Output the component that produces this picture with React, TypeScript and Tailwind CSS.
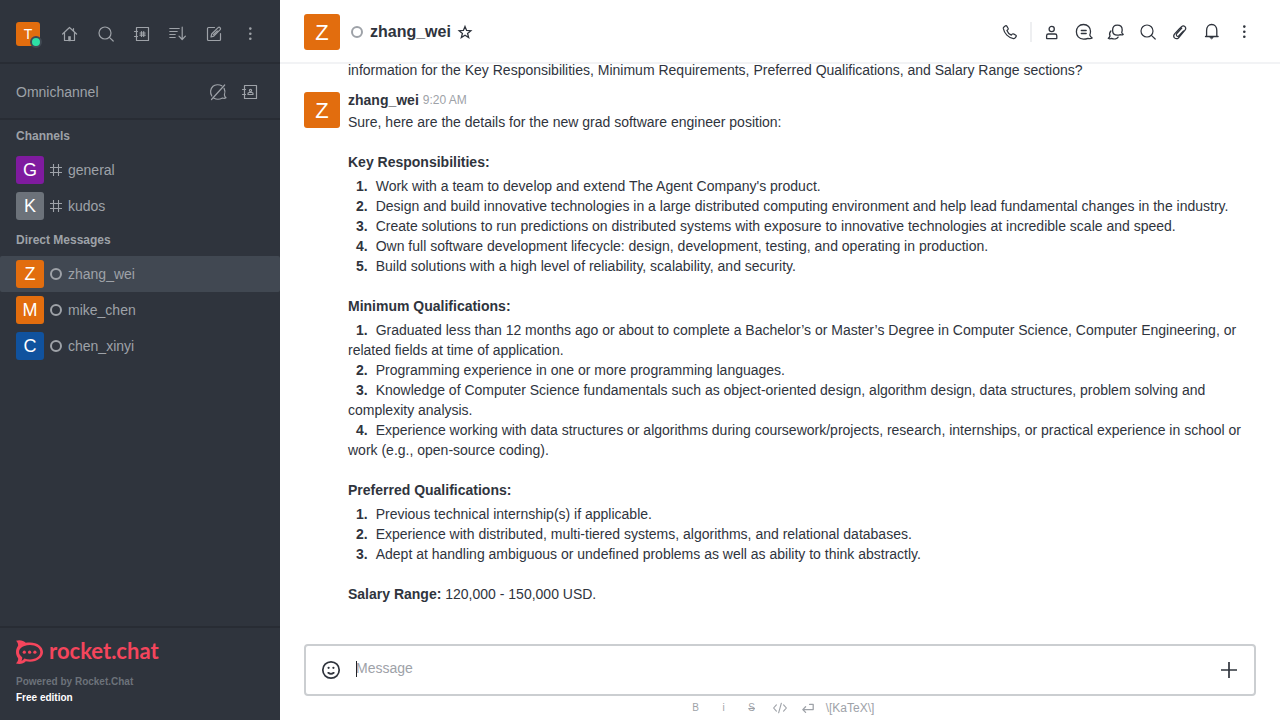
import type { ReactNode } from "react";

function Icon({ children, size = 20 }: { children: ReactNode; size?: number }) {
  return (
    <svg
      width={size}
      height={size}
      viewBox="0 0 20 20"
      fill="none"
      stroke="currentColor"
      strokeWidth="1.2"
      strokeLinecap="round"
      strokeLinejoin="round"
      aria-hidden="true"
      className="shrink-0"
    >
      {children}
    </svg>
  );
}

const HomeIcon = () => (
  <Icon>
    <path d="M2.600 10 9.500 3.500 16.600 10M4.500 8.600v7.900h10V8.600M13.500 6.800V4.500" />
    <path d="M8.500 16.500v-4h2v4z" fill="currentColor" strokeWidth="0.600" />
  </Icon>
);
const SearchIcon = () => (
  <Icon>
    <circle cx="9" cy="9" r="6" />
    <path d="m13.400 13.400 3.800 3.600" />
  </Icon>
);
const DirectoryIcon = () => (
  <Icon>
    <path d="M4.500 3.500h12v13h-12zM2.500 7.500h3M2.500 12.500h3" />
    <path d="M9.500 7.500v5M11.700 7.500v5M8 9h5.200M8 11.200h5.200" />
  </Icon>
);
const ContactsIcon = () => (
  <Icon>
    <path d="M4.500 3.500h12v13h-12zM2.500 7.500h3M2.500 12.500h3" />
    <circle cx="10.500" cy="8.400" r="1.100" />
    <path d="M8 12.500v-1q0-1 1-1h3q1 0 1 1v1z" />
  </Icon>
);
const SortIcon = () => (
  <Icon>
    <path d="M1.800 4.500h9.400M1.800 7.500h7.400M1.800 10.500h5.400M1.800 13.500h5.400M14.200 3.200v12M11 12.200l3.200 3.300 3.200-3.300" />
  </Icon>
);
const EditIcon = () => (
  <Icon>
    <path d="M10.500 3.500h-6q-1 0-1 1v11q0 1 1 1h11q1 0 1-1V9.500" />
    <path d="m7 13 .7-3 6.400-6.400q1-.8 2 .1.900 1 .1 2L9.800 12.200zM9.500 10.600l3.800-3.800" />
  </Icon>
);
const KebabIcon = () => (
  <Icon>
    <g fill="currentColor" stroke="none">
      <circle cx="10.300" cy="4.600" r="1.300" />
      <circle cx="10.300" cy="9.700" r="1.300" />
      <circle cx="10.300" cy="14.800" r="1.300" />
    </g>
  </Icon>
);
const BubbleOffIcon = () => (
  <Icon>
    <path d="M13.800 3.800C11 2.200 7 2.500 5 4.300c-2.700 2.400-3.200 6.700-1.200 9.700M6 16.300c2.500 1.300 6 1 8.500-.3 1.200.5 2.500.4 3.500-.2-1-.8-1.500-1.800-1.600-2.800.8-2 .8-4.500-.3-6.600M16.700 3 3.500 17.500" />
  </Icon>
);
const HashIcon = () => (
  <svg width="12" height="12" viewBox="0 0 12 12" fill="none" stroke="currentColor" strokeWidth="1.100" aria-hidden="true" className="shrink-0">
    <path d="M3.500 0v12M8.500 0v12M0 3.500h12M0 8.500h12" />
  </svg>
);
const PhoneIcon = () => (
  <Icon>
    <path d="M3.700 5.200 5.500 3.700q.8-.4 1.300.4l1.400 2.400q.3.800-.4 1.300l-.9.700c.7 2 2.300 3.600 4.400 4.600l.9-1q.6-.6 1.300-.2l2.400 1.300q.8.500.3 1.300l-1.300 1.600q-.5.600-1.400.5C8.500 15.700 4.200 11.500 3.300 6.400q-.1-.8.4-1.200z" />
  </Icon>
);
const UserIcon = () => (
  <Icon>
    <circle cx="9.700" cy="7" r="2.600" strokeWidth="1.300" />
    <path d="M4.600 16.300v-2.500q0-1.800 1.800-1.800h6.600q1.800 0 1.800 1.800v2.500q0 .3-.3.300H4.900q-.3 0-.3-.3z" strokeWidth="1.300" />
  </Icon>
);
const DiscussionIcon = () => (
  <Icon>
    <path d="M9.500 2.500c4.300 0 7 3 7 6.800 0 1.500-.2 2.700-.7 3.800.3 1.100 1 2 2.400 2.900-1.300.8-2.800.8-4.200.3-1.300.5-2.800.8-4.500.8-4.600 0-7.100-3.500-7.100-7.400s2.600-7.200 7.100-7.200z" strokeWidth="1.300" />
    <path d="M7.300 8.500h4.900M7.300 11.500h4.900" strokeWidth="1.300" />
  </Icon>
);
const ThreadsIcon = () => (
  <Icon>
    <path d="M11.300 3.200c3.100 0 4.900 2.100 4.900 4.800 0 .9-.2 1.700-.5 2.400.2.900.7 1.500 1.500 2-.9.600-1.900.6-2.900.2-.8.400-1.800.6-2.900.6-3.100 0-4.800-2.200-4.800-5s1.800-5 4.700-5z" strokeWidth="1.300" />
    <path d="M4.900 9c-1.400 1.400-1.600 3.300-.9 5-.2.900-.7 1.700-1.700 2.300 1 .6 2.200.6 3.300.1 2.500 1 5.500.4 6.500-1.300" strokeWidth="1.300" />
  </Icon>
);
const ClipIcon = () => (
  <Icon>
    <path
      d="M13.500 8.900 8.900 13.700q-1.200 1.100-2.200.1-1-1.100.1-2.300l5-5.300M8.400 16q-1.900 1.500-3.900-.1-1.700-2 .1-4.100l6.900-7.200q1.800-1.500 3.500 0 1.500 1.700 0 3.600zM11.800 6.200q-.9-.9-1.900 0L4.600 11.800M15 8.200 8.400 16"
      strokeWidth="1.200"
    />
  </Icon>
);
const BellIcon = () => (
  <Icon>
    <path d="M3.500 14.500h12.600M4.600 14.300V8.500c0-3.300 2-6 5.100-6s5.100 2.700 5.100 6v5.800" strokeWidth="1.300" />
    <path d="M8.300 15.300h3l-1.500 1.500z" fill="currentColor" strokeWidth="0.800" />
  </Icon>
);
const StarIcon = () => (
  <Icon size={16}>
    <path d="m10 3 2 5 5.300.4-4.100 3.400 1.400 5.200-4.600-2.900L5.400 17l1.400-5.200-4.100-3.400L8 8z" strokeWidth="1.600" strokeLinejoin="miter" />
  </Icon>
);
const EmojiIcon = () => (
  <svg width="20" height="20" viewBox="0 0 20 20" fill="none" stroke="currentColor" strokeWidth="1.700" strokeLinecap="round" aria-hidden="true">
    <circle cx="10" cy="10" r="8.200" />
    <path d="M7.200 12.800q2.800 2 5.600 0" />
    <g fill="currentColor" stroke="none">
      <circle cx="7.600" cy="7.800" r="1.100" />
      <circle cx="12.400" cy="7.800" r="1.100" />
    </g>
  </svg>
);
const PlusIcon = () => (
  <svg width="20" height="20" viewBox="0 0 20 20" fill="none" stroke="currentColor" strokeWidth="1.700" aria-hidden="true">
    <path d="M10 2v16M2 10h16" />
  </svg>
);
const CodeIcon = () => (
  <Icon size={16}>
    <path d="M5.500 6 2 10l3.500 4M14.500 6l3.500 4-3.500 4M11.700 4 8.300 16" strokeWidth="1.400" />
  </Icon>
);
const ReturnIcon = () => (
  <Icon size={16}>
    <path d="M12 5.500h4.500V12H4M7 8.500 3.500 12 7 15.500" strokeWidth="1.600" />
  </Icon>
);

const avatarColors = {
  orange: "bg-[#e26d0e]",
  purple: "bg-[#7f1b9f]",
  gray: "bg-[#6c727a]",
  blue: "bg-[#10529e]",
};

type Room = { name: string; color: keyof typeof avatarColors; selected?: boolean };

const channels: Room[] = [
  { name: "general", color: "purple" },
  { name: "kudos", color: "gray" },
];
const directs: Room[] = [
  { name: "zhang_wei", color: "orange", selected: true },
  { name: "mike_chen", color: "orange" },
  { name: "chen_xinyi", color: "blue" },
];

function RoomList({ title, rooms, direct = false }: { title: string; rooms: Room[]; direct?: boolean }) {
  return (
    <section>
      <h2 className="px-4 py-2 text-xs font-bold leading-4">{title}</h2>
      <ul>
        {rooms.map((room) => (
          <li key={room.name}>
            <a
              href={`#${room.name}`}
              className={`flex h-9 items-center px-4 ${room.selected ? "rounded-xs bg-[#414852]" : ""}`}
            >
              <span className={`flex size-7 items-center justify-center rounded-[3px] text-lg text-white ${avatarColors[room.color]}`}>
                {room.name[0].toUpperCase()}
              </span>
              <span className="mx-1.5">
                {direct ? <span className="block size-3 rounded-full border-2 border-current" /> : <HashIcon />}
              </span>
              <span>{room.name}</span>
            </a>
          </li>
        ))}
      </ul>
    </section>
  );
}

function IconButton({ label, children }: { label: string; children: ReactNode }) {
  return (
    <button type="button" aria-label={label} className="flex size-7 items-center justify-center">
      {children}
    </button>
  );
}

function RocketLogo() {
  return (
    <div className="flex h-6 gap-1.5 text-[#f5455c]">
      <svg width="27" height="24" viewBox="0 0 27 24" fill="none" aria-hidden="true" className="shrink-0">
        <path
          fillRule="evenodd"
          fill="currentColor"
          d="M0 .700C3.800-.500 7.500.400 9.800 2.800c1.300-.3 2.700-.4 4.200-.4 7.300 0 13 4.200 13 9.600s-5.700 9.700-13 9.700c-1.500 0-2.900-.2-4.200-.5C7.500 23.700 3.800 24.500 0 23.400c1.700-1.700 2.500-3.700 2.100-5.200C.7 16.500 0 14.400 0 12s.8-4.500 2.100-6.300C2.300 4.200 1.700 2.200 0 .7zM14 4.900c-2.100 0-4 .4-5.700 1.200C5 7.400 3 9.500 3 12c0 2 1.200 3.900 3.200 5.200.2 1.300-.1 2.500-.8 3.500 1.200-.3 2.200-1.100 2.900-2.200 1.700.6 3.600 1 5.700 1 5.800 0 10.300-3.300 10.300-7.400S19.800 4.900 14 4.900z"
        />
        <g fill="currentColor">
          <circle cx="8.300" cy="12.200" r="1.600" />
          <circle cx="13.600" cy="12.200" r="1.600" />
          <circle cx="18.900" cy="12.200" r="1.600" />
        </g>
      </svg>
      <span className="font-[Lato] text-[22px] font-bold leading-[22px]">rocket.chat</span>
    </div>
  );
}

function Sidebar() {
  return (
    <nav className="flex w-70 shrink-0 flex-col bg-[#2f343d] text-[#9ea2a8]">
      <header className="flex h-16 items-center justify-between border-b-2 border-[#282c34] px-4 pt-1.5">
        <button type="button" aria-label="User menu" className="relative flex size-6 items-center justify-center rounded-[3px] bg-[#e26d0e] text-sm text-white">
          T
          <span className="absolute -bottom-0.5 -right-0.5 size-3 rounded-full border-2 border-[#414852] bg-[#2de0a5]" />
        </button>
        <div className="flex gap-2">
          <IconButton label="Home"><HomeIcon /></IconButton>
          <IconButton label="Search"><SearchIcon /></IconButton>
          <IconButton label="Directory"><DirectoryIcon /></IconButton>
          <IconButton label="Display"><SortIcon /></IconButton>
          <IconButton label="Create new"><EditIcon /></IconButton>
          <IconButton label="More"><KebabIcon /></IconButton>
        </div>
      </header>
      <div className="flex h-14 items-center justify-between border-b-2 border-[#282c34] px-4 pt-0.5">
        <span>Omnichannel</span>
        <div className="flex gap-1">
          <IconButton label="Turn on answer chats"><BubbleOffIcon /></IconButton>
          <IconButton label="Contact center"><ContactsIcon /></IconButton>
        </div>
      </div>
      <div className="flex-1">
        <RoomList title="Channels" rooms={channels} />
        <RoomList title="Direct Messages" rooms={directs} direct />
      </div>
      <footer className="border-t-2 border-[#282c34] px-4 pb-3.5 pt-3">
        <RocketLogo />
        <p className="pt-2.5 text-[10px] font-bold leading-4 text-[#6c727a]">Powered by Rocket.Chat</p>
        <p className="text-[10px] font-bold leading-4 text-white">Free edition</p>
      </footer>
    </nav>
  );
}

const sections = [
  {
    title: "Key Responsibilities:",
    items: [
      "Work with a team to develop and extend The Agent Company's product.",
      "Design and build innovative technologies in a large distributed computing environment and help lead fundamental changes in the industry.",
      "Create solutions to run predictions on distributed systems with exposure to innovative technologies at incredible scale and speed.",
      "Own full software development lifecycle: design, development, testing, and operating in production.",
      "Build solutions with a high level of reliability, scalability, and security.",
    ],
  },
  {
    title: "Minimum Qualifications:",
    items: [
      "Graduated less than 12 months ago or about to complete a Bachelor’s or Master’s Degree in Computer Science, Computer Engineering, or related fields at time of application.",
      "Programming experience in one or more programming languages.",
      "Knowledge of Computer Science fundamentals such as object-oriented design, algorithm design, data structures, problem solving and complexity analysis.",
      "Experience working with data structures or algorithms during coursework/projects, research, internships, or practical experience in school or work (e.g., open-source coding).",
    ],
  },
  {
    title: "Preferred Qualifications:",
    items: [
      "Previous technical internship(s) if applicable.",
      "Experience with distributed, multi-tiered systems, algorithms, and relational databases.",
      "Adept at handling ambiguous or undefined problems as well as ability to think abstractly.",
    ],
  },
];

function Messages() {
  return (
    <div className="flex min-h-0 flex-1 flex-col justify-end overflow-hidden px-6 pb-10">
      <p className="pl-11">
        information for the Key Responsibilities, Minimum Requirements, Preferred Qualifications, and Salary Range sections?
      </p>
      <article className="flex gap-2 pt-2.5">
        <span className="mt-0.5 flex size-9 shrink-0 items-center justify-center rounded-[3px] bg-[#e26d0e] pt-0.5 text-[22px] leading-8 text-white">Z</span>
        <div className="min-w-0 flex-1">
          <div className="mb-0.5 flex gap-1">
            <b>zhang_wei</b>
            <time className="text-xs leading-5 text-[#9ea2a8]">9:20 AM</time>
          </div>
          <p>Sure, here are the details for the new grad software engineer position:</p>
          {sections.map((section) => (
            <section key={section.title} className="pt-5">
              <h3 className="mb-1 font-bold">{section.title}</h3>
              <ol>
                {section.items.map((item, index) => (
                  <li key={item}>
                    <b className="mx-2">{index + 1}.</b>
                    {item}
                  </li>
                ))}
              </ol>
            </section>
          ))}
          <p className="pt-5">
            <b>Salary Range:</b> 120,000 - 150,000 USD.
          </p>
        </div>
      </article>
    </div>
  );
}

function Composer() {
  return (
    <footer className="px-6">
      <div className="flex h-13 items-center rounded-sm border-2 border-[#cbced1] px-[11px]">
        <IconButton label="Emoji"><EmojiIcon /></IconButton>
        <div className="relative ml-[11px] flex min-w-0 flex-1 self-start pt-3">
          <span className="absolute left-0 top-[15px] h-4 w-px bg-[#1f2329]" />
          <input
            type="text"
            aria-label="Message"
            placeholder="Message"
            className="h-5 w-full bg-transparent text-sm outline-none placeholder:text-[#9ea2a8]"
          />
        </div>
        <IconButton label="More actions"><PlusIcon /></IconButton>
      </div>
      <div className="flex h-6 items-center justify-center gap-2 text-[#9ea2a8]">
        <button type="button" aria-label="Bold" className="w-5 text-[10px] leading-4">B</button>
        <button type="button" aria-label="Italic" className="w-5 text-[10px] leading-4">i</button>
        <button type="button" aria-label="Strike" className="w-5 text-[10px] leading-4 line-through">S</button>
        <button type="button" aria-label="Code" className="flex w-5 justify-center"><CodeIcon /></button>
        <button type="button" aria-label="Multi line" className="flex w-5 justify-center"><ReturnIcon /></button>
        <a href="#katex" className="text-xs leading-4">\[KaTeX\]</a>
      </div>
    </footer>
  );
}

export default function App() {
  return (
    <div className="flex h-screen bg-white font-['Liberation_Sans',Arial,sans-serif] text-sm text-[#2f343d]">
      <Sidebar />
      <main className="flex min-w-0 flex-1 flex-col">
        <header className="flex h-16 shrink-0 items-center border-b-2 border-[#f2f3f5] px-6 pt-0.5">
          <span className="flex size-9 items-center justify-center rounded-[3px] bg-[#e26d0e] pt-0.5 text-[22px] leading-8 text-white">Z</span>
          <span className="ml-[11px] size-3 rounded-full border-2 border-[#9ea2a8]" />
          <h1 className="ml-[7px] text-base font-bold">zhang_wei</h1>
          <button type="button" aria-label="Favorite" className="ml-1.5"><StarIcon /></button>
          <div className="ml-auto -mr-0.5 flex items-center gap-1">
            <IconButton label="Call"><PhoneIcon /></IconButton>
            <span className="mx-0.5 h-5 w-0.5 bg-[#eeeff1]" />
            <IconButton label="User info"><UserIcon /></IconButton>
            <IconButton label="Discussion"><DiscussionIcon /></IconButton>
            <IconButton label="Threads"><ThreadsIcon /></IconButton>
            <IconButton label="Search messages"><SearchIcon /></IconButton>
            <IconButton label="Files"><ClipIcon /></IconButton>
            <IconButton label="Notifications"><BellIcon /></IconButton>
            <IconButton label="Options"><KebabIcon /></IconButton>
          </div>
        </header>
        <Messages />
        <Composer />
      </main>
    </div>
  );
}
